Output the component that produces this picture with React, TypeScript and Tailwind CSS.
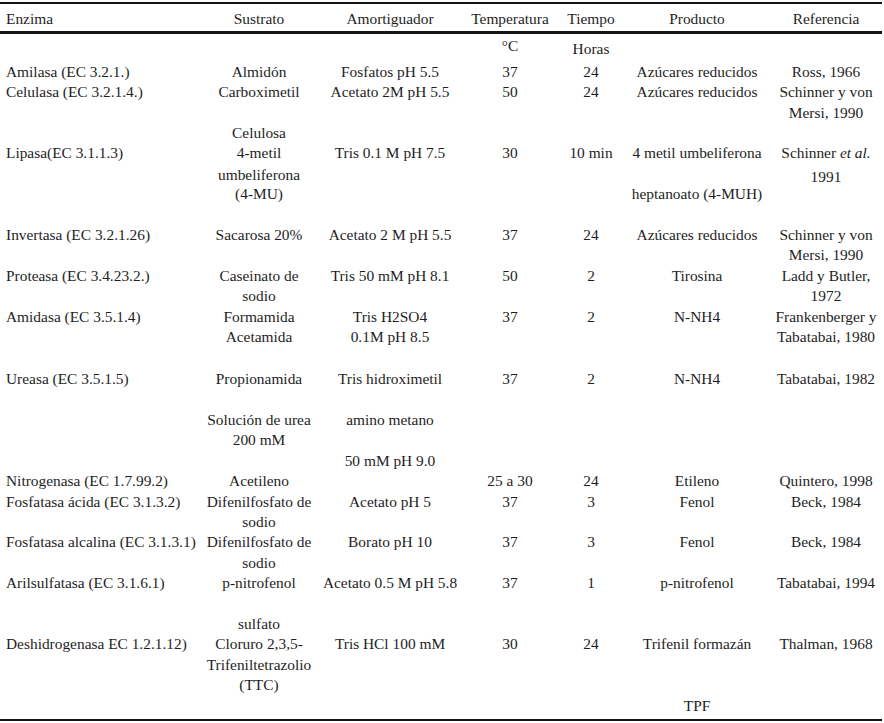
import { FC, ReactNode } from "react"

type Row = {
    h: string
    cells: ReactNode[][]
    pad?: string[]
}

const cols = "grid grid-cols-[200px_118px_144px_96px_66px_146px_112px]"

const headers = ["Enzima", "Sustrato", "Amortiguador", "Temperatura", "Tiempo", "Producto", "Referencia"]

// every text line sits on a 20.4px pitch, like the word document it comes from
const rows: Row[] = [
    { h: "h-[27.8px]", cells: [[], [], [], ["°C"], ["Horas"], [], []], pad: ["", "", "", "pt-[2px]", "pt-[5px]", "", ""] },
    { h: "h-[20.4px]", cells: [["Amilasa (EC 3.2.1.)"], ["Almidón"], ["Fosfatos pH 5.5"], ["37"], ["24"], ["Azúcares reducidos"], ["Ross, 1966"]] },
    { h: "h-[61.2px]", cells: [["Celulasa (EC 3.2.1.4.)"], ["Carboximetil", "", "Celulosa"], ["Acetato 2M pH 5.5"], ["50"], ["24"], ["Azúcares reducidos"], ["Schinner y von", "Mersi, 1990"]] },
    {
        h: "h-[81.6px]",
        cells: [
            ["Lipasa(EC 3.1.1.3)"],
            ["4-metil", <span className="relative top-[1px]">umbeliferona</span>, "(4-MU)"],
            ["Tris 0.1 M pH 7.5"],
            ["30"],
            ["10 min"],
            ["4 metil umbeliferona", "", "heptanoato (4-MUH)"],
            [<>Schinner <i>et al.</i></>, <span className="relative top-[3px]">1991</span>],
        ],
    },
    { h: "h-[40.8px]", cells: [["Invertasa (EC 3.2.1.26)"], ["Sacarosa 20%"], ["Acetato 2 M pH 5.5"], ["37"], ["24"], ["Azúcares reducidos"], ["Schinner y von", "Mersi, 1990"]] },
    { h: "h-[40.8px]", cells: [["Proteasa (EC 3.4.23.2.)"], ["Caseinato de", "sodio"], ["Tris 50 mM pH 8.1"], ["50"], ["2"], ["Tirosina"], ["Ladd y Butler,", "1972"]] },
    { h: "h-[62.7px]", cells: [["Amidasa (EC 3.5.1.4)"], ["Formamida", "Acetamida"], ["Tris H2SO4", "0.1M pH 8.5"], ["37"], ["2"], ["N-NH4"], ["Frankenberger y", "Tabatabai, 1980"]] },
    {
        h: "h-[102px]",
        cells: [
            ["Ureasa (EC 3.5.1.5)"],
            ["Propionamida", "", "Solución de urea", "200 mM"],
            ["Tris hidroximetil", "", "amino metano", "", "50 mM pH 9.0"],
            ["37"],
            ["2"],
            ["N-NH4"],
            ["Tabatabai, 1982"],
        ],
    },
    { h: "h-[20.4px]", cells: [["Nitrogenasa (EC 1.7.99.2)"], ["Acetileno"], [], ["25 a 30"], ["24"], ["Etileno"], ["Quintero, 1998"]] },
    { h: "h-[40.8px]", cells: [["Fosfatasa ácida (EC 3.1.3.2)"], ["Difenilfosfato de", "sodio"], ["Acetato pH 5"], ["37"], ["3"], ["Fenol"], ["Beck, 1984"]] },
    { h: "h-[40.8px]", cells: [["Fosfatasa alcalina (EC 3.1.3.1)"], ["Difenilfosfato de", "sodio"], ["Borato pH 10"], ["37"], ["3"], ["Fenol"], ["Beck, 1984"]] },
    { h: "h-[61.2px]", cells: [["Arilsulfatasa (EC 3.1.6.1)"], ["p-nitrofenol", "", "sulfato"], ["Acetato 0.5 M pH 5.8"], ["37"], ["1"], ["p-nitrofenol"], ["Tabatabai, 1994"]] },
    {
        h: "h-[81.6px]",
        cells: [
            ["Deshidrogenasa EC 1.2.1.12)"],
            ["Cloruro 2,3,5-", "Trifeniltetrazolio", "(TTC)"],
            ["Tris HCl 100 mM"],
            ["30"],
            ["24"],
            ["Trifenil formazán", "", "", "TPF"],
            ["Thalman, 1968"],
        ],
    },
]

const Cell: FC<{ lines: ReactNode[]; first: boolean; pad?: string }> = ({ lines, first, pad }) => (
    <div className={`${first ? "pl-[6px] text-left" : "text-center"} ${pad ?? ""}`}>
        {lines.map((line, i) => (
            <div key={i} className="h-[20.4px] whitespace-nowrap">
                {line}
            </div>
        ))}
    </div>
)

const App: FC = () => {
    return (
        <div className="font-serif">
            <div className="w-[884px] h-[723px] bg-white pt-[2px] text-[#1e1e1e] text-[15.4px] leading-[20.4px] font-['Liberation_Serif'] overflow-hidden">
                <div className="w-[882px] border-t-2 border-b-2 border-[#141414]">
                    <div className={`${cols} h-[30px] pt-[5px] border-b-[3px] border-[#141414]`}>
                        {headers.map((text, i) => (
                            <div key={text} className={i === 0 ? "pl-[6px] text-left" : "text-center"}>
                                {text}
                            </div>
                        ))}
                    </div>
                    {rows.map((row, r) => (
                        <div key={r} className={`${cols} ${row.h}`}>
                            {row.cells.map((lines, c) => (
                                <Cell key={c} lines={lines} first={c === 0} pad={row.pad?.[c]} />
                            ))}
                        </div>
                    ))}
                    <div className="h-[2.9px]" />
                </div>
            </div>
        </div>
    )
}

export default App
